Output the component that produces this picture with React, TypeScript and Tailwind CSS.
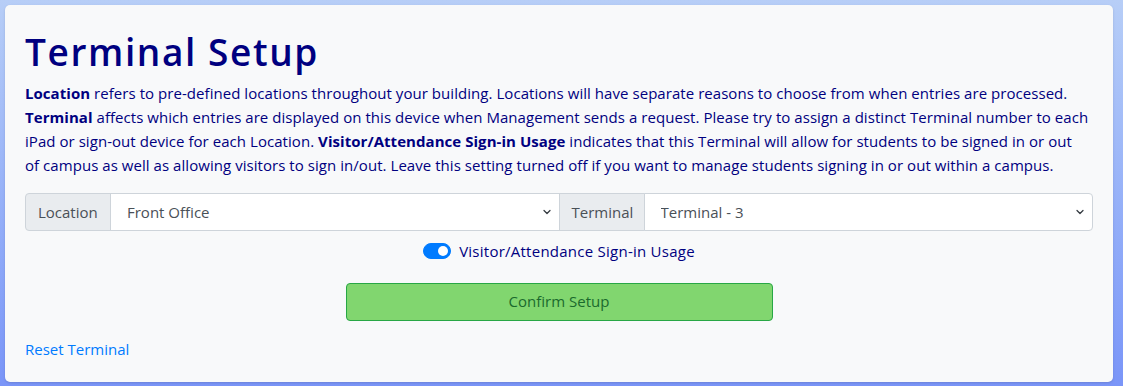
import React, { useState } from 'react';

export default function App() {
  const [usage, setUsage] = useState(true);

  return (
    <div
      className="w-[1123px] h-[386px] p-[5px] bg-gradient-to-b from-[#b7cef7] to-[#7a95f8]"
      style={{ fontFamily: '"Open Sans", "Noto Sans", sans-serif' }}
    >
      <div className="h-[377px] w-[1108px] bg-[#f8f9fa] rounded-[5px] shadow-sm px-5 pt-5 flex flex-col">
        <h1 className="text-[37px] leading-[44px] font-semibold tracking-[1.6px] text-[#000080] mt-[5px]">
          Terminal Setup
        </h1>

        <p className="mt-[7px] text-[15px] leading-6 text-[#000080] tracking-[0.05px] whitespace-nowrap">
          <b>Location</b> refers to pre-defined locations throughout your building. Locations will have separate
          reasons to choose from when entries are processed.
          <br />
          <b>Terminal</b> affects which entries are displayed on this device when Management sends a request. Please
          try to assign a distinct Terminal number to each
          <br />
          iPad or sign-out device for each Location. <b>Visitor/Attendance Sign-in Usage</b> indicates that this
          Terminal will allow for students to be signed in or out
          <br />
          of campus as well as allowing visitors to sign in/out. Leave this setting turned off if you want to manage
          students signing in or out within a campus.
        </p>

        {/* selects */}
        <div className="mt-[16px] flex h-[38px] text-[15px] text-[#495057]">
          <span className="flex items-center px-3 bg-[#e9ecef] border border-[#ced4da] rounded-l-[4px] w-[86px]">
            Location
          </span>
          <div className="relative flex-1 -ml-px">
            <select className="appearance-none w-full h-full bg-white border border-[#ced4da] pl-4 pr-8 outline-none">
              <option>Front Office</option>
            </select>
            <Chevron />
          </div>
          <span className="flex items-center px-3 bg-[#e9ecef] border border-[#ced4da] w-[86px] -ml-px">
            Terminal
          </span>
          <div className="relative flex-1 -ml-px">
            <select className="appearance-none w-full h-full bg-white border border-[#ced4da] rounded-r-[4px] pl-4 pr-8 outline-none">
              <option>Terminal - 3</option>
            </select>
            <Chevron />
          </div>
        </div>

        {/* switch */}
        <div className="mt-[9px] flex items-center justify-center gap-[8px] text-[15px] text-[#000080]">
          <button
            onClick={() => setUsage(!usage)}
            className={`relative w-[28px] h-[16px] rounded-full border ${
              usage ? 'bg-[#007bff] border-[#007bff]' : 'bg-white border-[#adb5bd]'
            }`}
          >
            <span
              className={`absolute top-[2px] w-[10px] h-[10px] rounded-full ${
                usage ? 'left-[14px] bg-white' : 'left-[2px] bg-[#adb5bd]'
              }`}
            />
          </button>
          <span className="tracking-[0.25px]">Visitor/Attendance Sign-in Usage</span>
        </div>

        {/* confirm */}
        <div className="mt-[20px] flex justify-center">
          <button className="w-[427px] h-[38px] bg-[#81d66f] border border-[#28a745] rounded-[4px] text-[15px] text-[#1a6a2d]">
            Confirm Setup
          </button>
        </div>

        <a href="#" className="mt-[17px] text-[15px] text-[#007bff] self-start">
          Reset Terminal
        </a>
      </div>
    </div>
  );
}

function Chevron() {
  return (
    <svg
      className="absolute right-[8px] top-1/2 -translate-y-1/2 pointer-events-none"
      width="10"
      height="8"
      viewBox="0 0 16 16"
    >
      <path d="M2 5l6 6 6-6" fill="none" stroke="#343a40" strokeWidth="2.5" strokeLinecap="round" strokeLinejoin="round" />
    </svg>
  );
}
